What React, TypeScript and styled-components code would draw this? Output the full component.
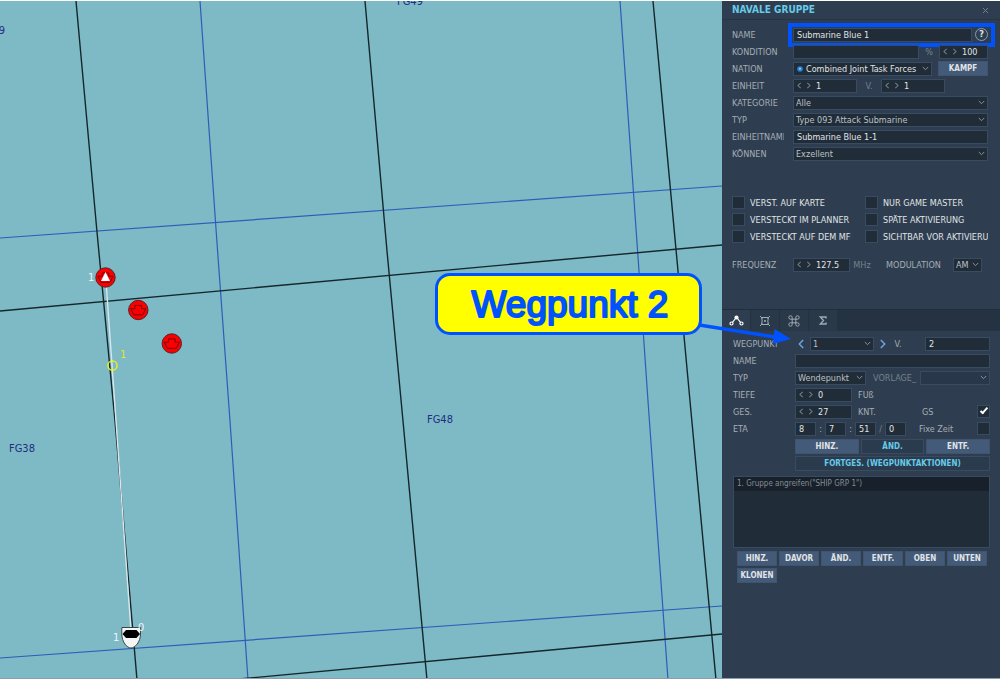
import React from "react";
import styled, { createGlobalStyle, css } from "styled-components";

const color = {
  panel: "#2e3e50",
  bar: "#243242",
  field: "#212c39",
  edge: "#384b60",
  label: "#a6adb4",
  dim: "#75818d",
  soft: "#bcc2c6",
  text: "#e0e4e6",
  cyan: "#66cbe9",
  button: "#435a78",
  water: "#7eb9c6",
  mark: "#0052ff",
};

const GlobalStyle = createGlobalStyle`
  *, *::before, *::after { box-sizing: border-box; }
  body {
    margin: 0;
    background: #ffffff;
    font-family: "DejaVu Sans Condensed", "DejaVu Sans", sans-serif;
  }
  button, input, select { font: inherit; color: inherit; margin: 0; }
`;

const Screen = styled.div`
  display: grid;
  grid-template-columns: minmax(0, 1fr) 278px;
  min-height: 100vh;
  border-top: 1px solid #ffffff;
  border-bottom: 1px solid #8d9dab;
`;

/* ---------- map ---------- */

const MapArea = styled.main`
  position: relative;
  z-index: 1;
  background: ${color.water};
`;

const Chart = styled.svg`
  position: absolute;
  inset: 0;
  width: 100%;
  height: 100%;
  font-size: 11px;
`;

const Callout = styled.div`
  position: absolute;
  top: 272px;
  right: 20px;
  width: 267px;
  height: 62px;
  border: 3px solid ${color.mark};
  border-radius: 15px;
  background: #ffff00;
`;

const CalloutText = styled.svg`
  display: block;
  width: 100%;
  height: 100%;
  fill: ${color.mark};
  stroke: ${color.mark};
  stroke-width: 2px;
  stroke-linejoin: round;
  stroke-linecap: round;
  font-family: "Liberation Sans", Arial, sans-serif;
  font-size: 37px;
  text-anchor: middle;
`;

const Arrow = styled.svg`
  position: absolute;
  top: 46px;
  left: 100%;
  width: 92px;
  height: 28px;
`;

/* ---------- panel ---------- */

const Panel = styled.aside`
  background: ${color.panel};
  color: ${color.text};
  font-size: 9px;
  line-height: 12px;
`;

const TitleBar = styled.header`
  display: flex;
  align-items: center;
  justify-content: space-between;
  height: 19px;
  padding: 0 11px 0 10px;
  border-bottom: 1px solid #263443;
`;

const Title = styled.h1`
  margin: 0;
  font-size: 10px;
  line-height: 12px;
  color: ${color.cyan};
`;

const IconButton = styled.button<{ $tone?: string }>`
  display: flex;
  flex: none;
  align-items: center;
  justify-content: center;
  padding: 0;
  border: 0;
  background: none;
  color: ${(p) => p.$tone ?? color.dim};
`;

const HelpButton = styled(IconButton)`
  width: 13px;
  height: 13px;
  border: 1px solid #8b9db0;
  border-radius: 50%;
  color: ${color.text};
  font-size: 9px;
  font-weight: bold;
  line-height: 11px;
`;

const Form = styled.form<{ $label: number; $pad: string }>`
  padding: ${(p) => p.$pad};
  --label: ${(p) => p.$label}px;
`;

const Row = styled.div`
  display: grid;
  grid-template-columns: var(--label) minmax(0, 1fr);
  align-items: center;
  height: 17px;
`;

const Label = styled.label`
  overflow: hidden;
  margin-right: 9px;
  white-space: nowrap;
  color: ${color.label};
`;

const Line = styled.div<{ $gap?: number; $inset?: number }>`
  position: relative;
  display: flex;
  align-items: center;
  gap: ${(p) => p.$gap ?? 0}px;
  padding-left: ${(p) => p.$inset ?? 0}px;
`;

const Highlighted = styled(Line)`
  &::after {
    content: "";
    position: absolute;
    inset: -5px -7px -5px -5px;
    border: 4px solid ${color.mark};
    pointer-events: none;
  }
`;

const fieldLook = css`
  height: 14px;
  border: 1px solid ${color.edge};
  background: ${color.field};
`;

const Field = styled.input<{ $w?: number }>`
  ${fieldLook}
  min-width: 0;
  padding: 0 3px;
  outline: 0;
  ${(p) => (p.$w ? `flex: none; width: ${p.$w}px;` : "flex: 1;")}
`;

const StepBox = styled.span<{ $w: number }>`
  ${fieldLook}
  display: flex;
  flex: none;
  align-items: center;
  gap: 4px;
  width: ${(p) => p.$w}px;
  padding: 0 3px;
`;

const StepInput = styled.input`
  flex: 1;
  min-width: 0;
  width: 0;
  height: 12px;
  padding: 0 0 0 1px;
  border: 0;
  outline: 0;
  background: none;
`;

const SelectBox = styled.span<{ $w?: number; $clear?: boolean }>`
  ${fieldLook}
  position: relative;
  display: flex;
  align-items: center;
  ${(p) => (p.$w ? `flex: none; width: ${p.$w}px;` : "flex: 1;")}
  ${(p) => p.$clear && "background: #28384a;"}
`;

const NativeSelect = styled.select<{ $indent?: number }>`
  appearance: none;
  width: 100%;
  height: 12px;
  padding: 0 0 0 ${(p) => p.$indent ?? 2}px;
  border: 0;
  outline: 0;
  background: none;
  color: ${(p) => (p.$indent ? color.text : color.soft)};
  line-height: 12px;
`;

const Caret = styled.svg`
  position: absolute;
  right: 2px;
  width: 7px;
  height: 5px;
  color: #8794a1;
  pointer-events: none;
`;

const Emblem = styled.svg`
  position: absolute;
  left: 3px;
  width: 6px;
  height: 6px;
`;

const Unit = styled.span<{ $w?: number; $bright?: boolean; $align?: string }>`
  flex: none;
  ${(p) => p.$w && `width: ${p.$w}px;`}
  text-align: ${(p) => p.$align ?? "center"};
  white-space: nowrap;
  color: ${(p) => (p.$bright ? color.label : color.dim)};
`;

const Tick = styled.input`
  appearance: none;
  flex: none;
  display: grid;
  place-items: center;
  width: 13px;
  height: 13px;
  border: 1px solid ${color.edge};
  background: ${color.field};

  &:checked::after {
    content: "";
    width: 8px;
    height: 4px;
    margin-top: -3px;
    border: solid #ffffff;
    border-width: 0 0 2px 2px;
    transform: rotate(-48deg);
  }
`;

const Options = styled.div`
  display: grid;
  grid-template-columns: 119px minmax(0, 1fr);
  grid-auto-rows: 17px;
  column-gap: 14px;
  margin: 32px 0 11px;
  align-items: center;
`;

const Option = styled.label`
  display: flex;
  align-items: center;
  gap: 5px;
  overflow: hidden;
  white-space: nowrap;
`;

const PushRight = styled.span`
  display: flex;
  align-items: center;
  justify-content: space-between;
  flex: 1;
  color: ${color.label};
`;

const Button = styled.button<{ $outlined?: boolean; $w?: number }>`
  height: 15px;
  padding: 0;
  border: 1px solid ${(p) => (p.$outlined ? color.edge : "#40546d")};
  background: ${(p) => (p.$outlined ? "#2b3b4e" : color.button)};
  color: ${(p) => (p.$outlined ? color.cyan : color.text)};
  font-size: 8px;
  font-weight: bold;
  line-height: 13px;
  ${(p) => p.$w && `flex: none; width: ${p.$w}px; margin-left: auto;`}
`;

const Tabs = styled.nav`
  display: flex;
  height: 22px;
  margin-top: 36px;
  border-top: 1px solid #202d3b;
  background: ${color.bar};
`;

const Tab = styled.button<{ $active?: boolean }>`
  display: flex;
  align-items: center;
  justify-content: center;
  width: 29px;
  padding: 0;
  border: 0;
  border-right: 1px solid #25333f;
  background: ${(p) => (p.$active ? color.panel : "#293949")};
  color: ${(p) => (p.$active ? "#ffffff" : "#a0aab2")};
`;

const ButtonRow = styled.div<{ $columns: number }>`
  display: grid;
  grid-template-columns: repeat(${(p) => p.$columns}, minmax(0, 1fr));
  column-gap: 2px;
  margin: 2px 0 2px var(--label);
`;

const ActionList = styled.ul`
  height: 72px;
  margin: 5px 0 3px;
  padding: 0;
  list-style: none;
  border: 1px solid ${color.edge};
  background: ${color.field};
`;

const ActionItem = styled.li`
  height: 14px;
  padding: 0 3px;
  background: #18212b;
  color: #838c94;
  font-size: 8px;
  line-height: 14px;
`;

const ActionButtons = styled.div`
  display: grid;
  grid-template-columns: repeat(6, minmax(0, 1fr));
  gap: 2px;
  padding: 0 3px 0 4px;
`;

/* ---------- small controls ---------- */

function Chevron({ dir, big }: { dir: "left" | "right"; big?: boolean }) {
  const d = dir === "left" ? "M4.5 1 1 4.5 4.5 8" : "M1.5 1 5 4.5 1.5 8";
  return (
    <svg width={big ? 7 : 5} height={big ? 10 : 7} viewBox="0 0 6 9" fill="none" stroke="currentColor" strokeWidth="1.3">
      <path d={d} />
    </svg>
  );
}

function Stepper({ id, label, value, width }: { id: string; label: string; value: string; width: number }) {
  return (
    <StepBox $w={width}>
      <IconButton type="button" aria-label={`${label} verringern`}>
        <Chevron dir="left" />
      </IconButton>
      <IconButton type="button" aria-label={`${label} erhöhen`}>
        <Chevron dir="right" />
      </IconButton>
      <StepInput id={id} aria-label={label} defaultValue={value} />
    </StepBox>
  );
}

type SelectProps = {
  id: string;
  label: string;
  value: string;
  width?: number;
  indent?: number;
  clear?: boolean;
  children?: React.ReactNode;
};

function Select({ id, label, value, width, indent, clear, children }: SelectProps) {
  return (
    <SelectBox $w={width} $clear={clear}>
      {children}
      <NativeSelect id={id} aria-label={label} $indent={indent} defaultValue={value}>
        <option>{value}</option>
      </NativeSelect>
      <Caret viewBox="0 0 7 5" fill="none" stroke="currentColor">
        <path d="M.8 1 3.5 3.7 6.2 1" />
      </Caret>
    </SelectBox>
  );
}

/* ---------- map drawing ---------- */

const blackLines = [
  "M76 0 97 231 115 420 137 679",
  "M365 0 387 250 403 420 427 679",
  "M653 0 678 270 690 400 716 679",
  "M0 310 722 244",
  "M228 679 722 633",
];
const blueLines = [
  "M200 0 217 242 230 420 248 679",
  "M620 0 639 270 648 400 668 679",
  "M0 237 722 185",
  "M0 657 722 605",
];

function EnemyShip({ x, y }: { x: number; y: number }) {
  return (
    <g transform={`translate(${x} ${y})`}>
      <circle r="9.7" fill="#fb0000" stroke="#5a2024" strokeWidth="1" />
      <path d="M-7.5-1.3H-3.3V-4.6H3.3V-1.3H7.5L4.6 4.8H-4.6Z" fill="none" stroke="#7a0000" />
    </g>
  );
}

function NauticalMap() {
  return (
    <Chart viewBox="0 0 722 677" preserveAspectRatio="xMinYMin slice" aria-label="Karte">
      <g fill="none" stroke="#2f5cba" strokeWidth="1.2">
        {blueLines.map((d) => <path key={d} d={d} />)}
      </g>
      <g fill="none" stroke="#14272b" strokeWidth="1.4">
        {blackLines.map((d) => <path key={d} d={d} />)}
      </g>
      <g fill="#1f2f80">
        <text x="-21" y="33">FG39</text>
        <text x="397" y="4">FG49</text>
        <text x="9" y="451">FG38</text>
        <text x="427" y="422">FG48</text>
      </g>
      <path d="M106 280 131 630" stroke="#d7e6ea" strokeWidth="1.4" />
      <EnemyShip x={105.5} y={276.5} />
      <path d="M105.5 271 110 280H101Z" fill="#ffffff" />
      <EnemyShip x={138.3} y={309} />
      <EnemyShip x={171.8} y={342.5} />
      <circle cx="112.5" cy="364.5" r="4.6" fill="none" stroke="#f4f410" strokeWidth="1.4" />
      <text x="120" y="357" fill="#dfe62a">1</text>
      <path d="M121.800 626.500H140.500V633C140.500 641 135 647 131 647S121.800 641 121.800 633Z" fill="#f4f5f5" stroke="#39474a" />
      <path d="M126 629H136.500L140 633 136.500 637H126L122.500 633Z" fill="#000000" />
      <g fill="#eef5f6">
        <text x="88" y="280">1</text>
        <text x="113" y="640">1</text>
        <text x="138" y="630">0</text>
      </g>
    </Chart>
  );
}

const options = [
  "VERST. AUF KARTE",
  "NUR GAME MASTER",
  "VERSTECKT IM PLANNER",
  "SPÄTE AKTIVIERUNG",
  "VERSTECKT AUF DEM MFD",
  "SICHTBAR VOR AKTIVIERUNG",
];

function GroupForm() {
  return (
    <Form $label={61} $pad="6px 12px 0 10px">
      <Row>
        <Label htmlFor="group">NAME</Label>
        <Highlighted $gap={3}>
          <Field id="group" defaultValue="Submarine Blue 1" />
          <HelpButton type="button" aria-label="Hilfe">?</HelpButton>
        </Highlighted>
      </Row>
      <Row>
        <Label htmlFor="condition">KONDITION</Label>
        <Line>
          <Field id="condition" />
          <Unit $w={20}>%</Unit>
          <Stepper id="chance" label="Wahrscheinlichkeit" value="100" width={49} />
        </Line>
      </Row>
      <Row>
        <Label htmlFor="nation">NATION</Label>
        <Line>
          <Select id="nation" label="Nation" value="Combined Joint Task Forces" width={139} indent={12}>
            <Emblem viewBox="0 0 6 6">
              <circle cx="3" cy="3" r="2.800" fill="#2583dc" />
              <circle cx="3" cy="2.800" r="1" fill="#9ed0f5" />
            </Emblem>
          </Select>
          <Button type="button" $w={50}>KAMPF</Button>
        </Line>
      </Row>
      <Row>
        <Label htmlFor="unit">EINHEIT</Label>
        <Line>
          <Stepper id="unit" label="Einheit" value="1" width={64} />
          <Unit $w={24}>V.</Unit>
          <Stepper id="units" label="Anzahl" value="1" width={64} />
        </Line>
      </Row>
      <Row>
        <Label htmlFor="category">KATEGORIE</Label>
        <Select id="category" label="Kategorie" value="Alle" />
      </Row>
      <Row>
        <Label htmlFor="type">TYP</Label>
        <Select id="type" label="Typ" value="Type 093 Attack Submarine" />
      </Row>
      <Row>
        <Label htmlFor="unitname">EINHEITNAME</Label>
        <Field id="unitname" defaultValue="Submarine Blue 1-1" />
      </Row>
      <Row>
        <Label htmlFor="skill">KÖNNEN</Label>
        <Select id="skill" label="Können" value="Exzellent" />
      </Row>
      <Options>
        {options.map((name) => (
          <Option key={name}>
            <Tick type="checkbox" />
            {name}
          </Option>
        ))}
      </Options>
      <Row>
        <Label htmlFor="frequency">FREQUENZ</Label>
        <Line>
          <Stepper id="frequency" label="Frequenz" value="127.5" width={57} />
          <Unit $w={24}>MHz</Unit>
          <Unit as="label" htmlFor="modulation" $w={79} $bright>MODULATION</Unit>
          <Select id="modulation" label="Modulation" value="AM" width={29} />
        </Line>
      </Row>
    </Form>
  );
}

function WaypointForm() {
  return (
    <Form $label={62} $pad="4px 10px 0 11px">
      <Row>
        <Label htmlFor="waypoint">WEGPUNKT</Label>
        <Line $gap={5} $inset={3}>
          <IconButton type="button" $tone="#6ea6e0" aria-label="Vorheriger Wegpunkt">
            <Chevron dir="left" big />
          </IconButton>
          <Select id="waypoint" label="Wegpunkt" value="1" width={64} />
          <IconButton type="button" $tone="#6ea6e0" aria-label="Nächster Wegpunkt">
            <Chevron dir="right" big />
          </IconButton>
          <Unit $w={14} $bright>V.</Unit>
          <PushRight />
          <Field $w={65} aria-label="Anzahl Wegpunkte" defaultValue="2" />
        </Line>
      </Row>
      <Row>
        <Label htmlFor="wpname">NAME</Label>
        <Field id="wpname" />
      </Row>
      <Row>
        <Label htmlFor="wptype">TYP</Label>
        <Line $gap={4}>
          <Select id="wptype" label="Wegpunkttyp" value="Wendepunkt" width={71} />
          <Unit as="label" htmlFor="template" $w={46} $align="right">VORLAGE_</Unit>
          <Select id="template" label="Vorlage" value="" clear />
        </Line>
      </Row>
      <Row>
        <Label htmlFor="depth">TIEFE</Label>
        <Line $gap={6}>
          <Stepper id="depth" label="Tiefe" value="0" width={57} />
          <Unit $bright>FUß</Unit>
        </Line>
      </Row>
      <Row>
        <Label htmlFor="speed">GES.</Label>
        <Line $gap={6}>
          <Stepper id="speed" label="Geschwindigkeit" value="27" width={57} />
          <Unit $w={58} $bright $align="left">KNT.</Unit>
          <PushRight as="label">
            GS
            <Tick type="checkbox" defaultChecked />
          </PushRight>
        </Line>
      </Row>
      <Row>
        <Label htmlFor="hours">ETA</Label>
        <Line>
          <Field id="hours" $w={21} defaultValue="8" />
          <Unit $w={9} $bright>:</Unit>
          <Field $w={21} aria-label="Minuten" defaultValue="7" />
          <Unit $w={9} $bright>:</Unit>
          <Field $w={21} aria-label="Sekunden" defaultValue="51" />
          <Unit $w={9}>/</Unit>
          <Field $w={21} aria-label="Tag" defaultValue="0" />
          <Unit $w={13} />
          <PushRight as="label">
            Fixe Zeit
            <Tick type="checkbox" />
          </PushRight>
        </Line>
      </Row>
      <ButtonRow $columns={3}>
        <Button type="button">HINZ.</Button>
        <Button type="button" $outlined>ÄND.</Button>
        <Button type="button">ENTF.</Button>
      </ButtonRow>
      <ButtonRow $columns={1}>
        <Button type="button" $outlined>FORTGES. (WEGPUNKTAKTIONEN)</Button>
      </ButtonRow>
      <ActionList>
        <ActionItem>1. Gruppe angreifen("SHIP GRP 1")</ActionItem>
      </ActionList>
      <ActionButtons>
        {["HINZ.", "DAVOR", "ÄND.", "ENTF.", "OBEN", "UNTEN", "KLONEN"].map((name) => (
          <Button key={name} type="button">{name}</Button>
        ))}
      </ActionButtons>
    </Form>
  );
}

export default function App() {
  return (
    <Screen>
      <GlobalStyle />
      <MapArea>
        <NauticalMap />
        <Callout>
          <CalloutText viewBox="0 0 261 56">
            <text x="132" y="41">Wegpunkt 2</text>
          </CalloutText>
          <Arrow viewBox="0 0 92 28" fill={color.mark}>
            <path d="M0 3 76 15" stroke={color.mark} strokeWidth="3.500" />
            <path d="M75.500 7 92 17 74 22Z" />
          </Arrow>
        </Callout>
      </MapArea>
      <Panel>
        <TitleBar>
          <Title>NAVALE GRUPPE</Title>
          <IconButton type="button" aria-label="Schließen">
            <svg width="7" height="7" viewBox="0 0 7 7" stroke="currentColor">
              <path d="M1 1 6 6M6 1 1 6" />
            </svg>
          </IconButton>
        </TitleBar>
        <GroupForm />
        <Tabs>
          <Tab type="button" $active aria-label="Route">
            <svg width="15" height="11" viewBox="0 0 15 11" fill="none" stroke="currentColor" strokeWidth="1.2">
              <circle cx="2.500" cy="8.500" r="1.500" />
              <circle cx="12.500" cy="8.500" r="1.500" />
              <path d="M3.500 7.300 6.500 3.500M8.500 3.500 11.500 7.300" />
              <circle cx="7.500" cy="2.500" r="1.500" fill="currentColor" />
            </svg>
          </Tab>
          <Tab type="button" aria-label="Ziele">
            <svg width="12" height="12" viewBox="0 0 12 12" fill="none" stroke="currentColor">
              <path d="M1 1 3.500 3.500M11 1 8.500 3.500M1 11 3.500 8.500M11 11 8.500 8.500M2.500 2.500H9.500L8.800 6 9.500 9.500H2.500L3.200 6Z" />
              <circle cx="6" cy="6" r="1" fill="currentColor" stroke="none" />
            </svg>
          </Tab>
          <Tab type="button" aria-label="Systeme">
            <svg width="12" height="12" viewBox="0 0 12 12" fill="none" stroke="currentColor">
              <path d="M4.200 4.200H2.500A1.700 1.700 0 1 1 4.200 2.500V9.500A1.700 1.700 0 1 1 2.500 7.800H9.500A1.700 1.700 0 1 1 7.800 9.500V2.500A1.700 1.700 0 1 1 9.500 4.200Z" />
            </svg>
          </Tab>
          <Tab type="button" aria-label="Zusammenfassung">
            <svg width="8" height="9" viewBox="0 0 8 9" fill="none" stroke="currentColor" strokeWidth="1.400">
              <path d="M7 2.500V1H1.300L4.500 4.500 1.300 8H7V6.500" />
            </svg>
          </Tab>
        </Tabs>
        <WaypointForm />
      </Panel>
    </Screen>
  );
}
